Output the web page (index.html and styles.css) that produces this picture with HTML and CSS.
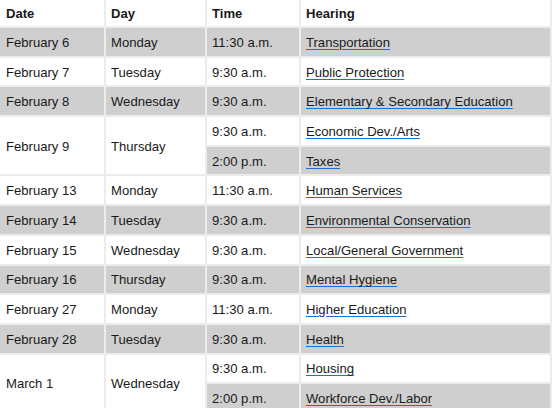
FILE: index.html
```html
<!DOCTYPE html>
<html>
<head>
<meta charset="utf-8">
<link rel="stylesheet" href="styles.css">
</head>
<body>
<table class="schedule">
  <thead>
    <tr class="head"><th class="c1">Date</th><th class="c2">Day</th><th class="c3">Time</th><th class="c4">Hearing</th></tr>
  </thead>
  <tbody>
    <tr class="shade"><td class="first">February 6</td><td>Monday</td><td>11:30 a.m.</td><td><a href="#">Transportation</a></td></tr>
    <tr><td class="first">February 7</td><td>Tuesday</td><td>9:30 a.m.</td><td><a href="#">Public Protection</a></td></tr>
    <tr class="shade"><td class="first">February 8</td><td>Wednesday</td><td>9:30 a.m.</td><td><a href="#">Elementary &amp; Secondary Education</a></td></tr>
    <tr><td class="first" rowspan="2">February 9</td><td rowspan="2">Thursday</td><td>9:30 a.m.</td><td><a href="#">Economic Dev./Arts</a></td></tr>
    <tr class="shade"><td>2:00 p.m.</td><td><a href="#">Taxes</a></td></tr>
    <tr><td class="first">February 13</td><td>Monday</td><td>11:30 a.m.</td><td><a href="#">Human Services</a></td></tr>
    <tr class="shade"><td class="first">February 14</td><td>Tuesday</td><td>9:30 a.m.</td><td><a href="#">Environmental Conservation</a></td></tr>
    <tr><td class="first">February 15</td><td>Wednesday</td><td>9:30 a.m.</td><td><a href="#">Local/General Government</a></td></tr>
    <tr class="shade"><td class="first">February 16</td><td>Thursday</td><td>9:30 a.m.</td><td><a href="#">Mental Hygiene</a></td></tr>
    <tr><td class="first">February 27</td><td>Monday</td><td>11:30 a.m.</td><td><a href="#">Higher Education</a></td></tr>
    <tr class="shade"><td class="first">February 28</td><td>Tuesday</td><td>9:30 a.m.</td><td><a href="#">Health</a></td></tr>
    <tr><td class="first" rowspan="2">March 1</td><td rowspan="2">Wednesday</td><td>9:30 a.m.</td><td><a href="#">Housing</a></td></tr>
    <tr class="shade"><td>2:00 p.m.</td><td><a href="#">Workforce Dev./Labor</a></td></tr>
  </tbody>
</table>
</body>
</html>
```
FILE: styles.css
```css
html, body {
  margin: 0;
  padding: 0;
  background: #ffffff;
}

.schedule {
  border-collapse: separate;
  border-spacing: 0;
  font-family: "Liberation Sans", Arial, sans-serif;
  font-size: 13.1px;
  color: #1a1a1a;
  table-layout: fixed;
  width: 552px;
}

.schedule th,
.schedule td {
  border-right: 2px solid #ececec;
  border-bottom: 2px solid #ececec;
  padding: 1px 0 0 5px;
  text-align: left;
  vertical-align: middle;
  height: 26.7px;
  box-sizing: content-box;
  white-space: nowrap;
}

.schedule .c1,
.schedule .first {
  padding-left: 6px;
}

.schedule th {
  font-weight: bold;
  height: 25px;
}

.c1 { width: 98px; }
.c2 { width: 94px; }
.c3 { width: 87px; }
.c4 { width: 244px; }

.shade td {
  background: #cfcfcf;
}

.schedule a {
  color: #1a1a1a;
  text-decoration: underline;
  text-decoration-color: #1d6fd6;
  text-underline-offset: 2px;
}
```
